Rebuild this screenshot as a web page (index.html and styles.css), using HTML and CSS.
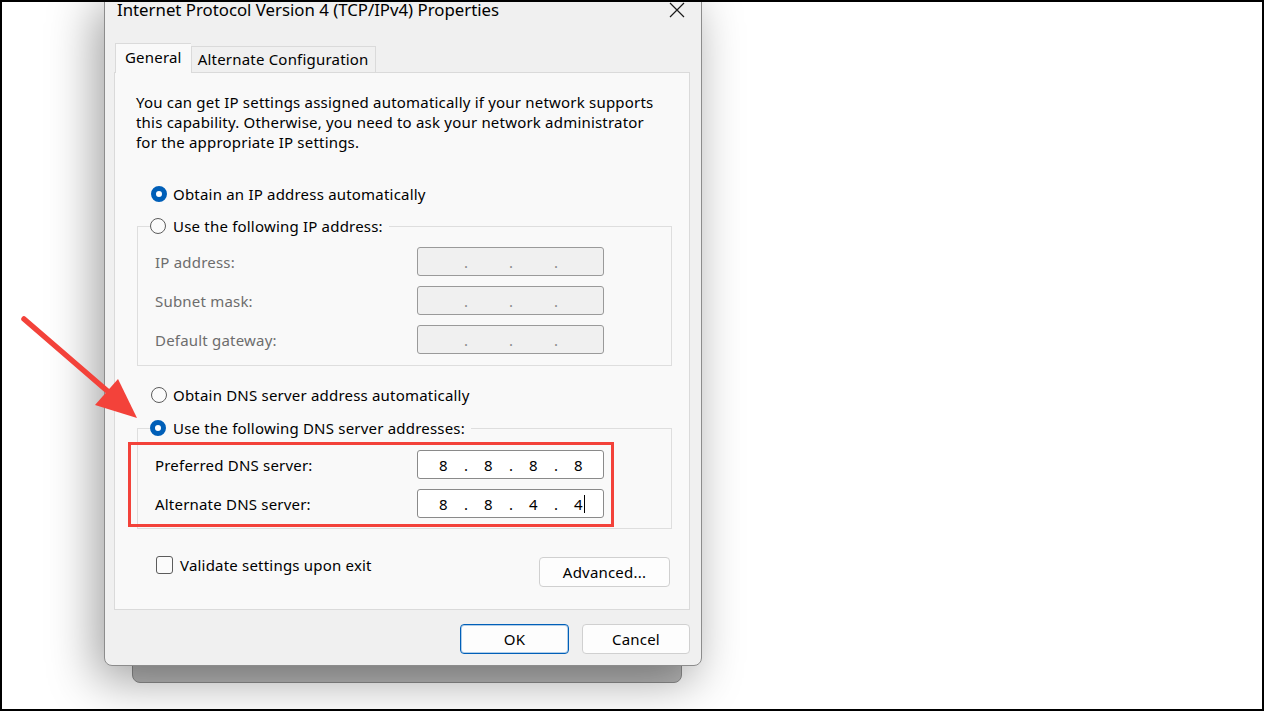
FILE: index.html
```html
<!DOCTYPE html>
<html>
<head>
<meta charset="utf-8">
<title>Internet Protocol Version 4 (TCP/IPv4) Properties</title>
<link rel="stylesheet" href="styles.css">
</head>
<body>
<div class="screen">
	<div class="back-window"></div>

	<div class="dialog">
		<div class="titlebar">
			<span class="title">Internet Protocol Version 4 (TCP/IPv4) Properties</span>
			<svg class="close" width="16" height="16" viewBox="0 0 16 16"><path d="M1 1L15 15M15 1L1 15" stroke="#1a1a1a" stroke-width="1.2" fill="none"/></svg>
		</div>

		<div class="tabs">
			<div class="tab active">General</div>
			<div class="tab">Alternate Configuration</div>
		</div>

		<div class="panel">
			<p class="intro">You can get IP settings assigned automatically if your network supports<br>this capability. Otherwise, you need to ask your network administrator<br>for the appropriate IP settings.</p>

			<div class="option first"><span class="radio on"></span>Obtain an IP address automatically</div>

			<fieldset class="group ip-group">
				<legend class="option"><span class="radio"></span>Use the following IP address:</legend>
				<div class="field"><span class="label">IP address:</span><div class="ipbox off"><span class="oct"></span><span class="dot">.</span><span class="oct"></span><span class="dot">.</span><span class="oct"></span><span class="dot">.</span><span class="oct"></span></div></div>
				<div class="field"><span class="label">Subnet mask:</span><div class="ipbox off"><span class="oct"></span><span class="dot">.</span><span class="oct"></span><span class="dot">.</span><span class="oct"></span><span class="dot">.</span><span class="oct"></span></div></div>
				<div class="field"><span class="label">Default gateway:</span><div class="ipbox off"><span class="oct"></span><span class="dot">.</span><span class="oct"></span><span class="dot">.</span><span class="oct"></span><span class="dot">.</span><span class="oct"></span></div></div>
			</fieldset>

			<div class="option dns-auto"><span class="radio"></span>Obtain DNS server address automatically</div>

			<fieldset class="group dns-group">
				<legend class="option"><span class="radio on"></span>Use the following DNS server addresses:</legend>
				<div class="field"><span class="label">Preferred DNS server:</span><div class="ipbox"><span class="oct">8</span><span class="dot">.</span><span class="oct">8</span><span class="dot">.</span><span class="oct">8</span><span class="dot">.</span><span class="oct">8</span></div></div>
				<div class="field"><span class="label">Alternate DNS server:</span><div class="ipbox"><span class="oct">8</span><span class="dot">.</span><span class="oct">8</span><span class="dot">.</span><span class="oct">4</span><span class="dot">.</span><span class="oct">4<span class="caret"></span></span></div></div>
			</fieldset>

			<div class="bottom-row">
				<div class="check"><span class="box"></span>Validate settings upon exit</div>
				<button class="btn advanced">Advanced...</button>
			</div>
		</div>

		<div class="actions">
			<button class="btn primary">OK</button>
			<button class="btn">Cancel</button>
		</div>
	</div>

	<div class="highlight"></div>

	<svg class="arrow" width="160" height="130" viewBox="0 300 160 130">
		<line x1="24" y1="319" x2="112" y2="395" stroke="#f3423a" stroke-width="5.5" stroke-linecap="round"/>
		<polygon points="95,405 118,379 137,418" fill="#f3423a"/>
	</svg>
</div>
</body>
</html>
```

FILE: styles.css
```css
body {
	margin: 0;
	font-family: "Noto Sans", "Open Sans", sans-serif;
	font-size: 15px;
	letter-spacing: .2px;
	color: #000;
}
.screen {
	position: relative;
	width: 1264px;
	height: 711px;
	box-sizing: border-box;
	border: 2px solid #000;
	background: #fff;
	overflow: hidden;
}
.back-window {
	position: absolute;
	left: 130px;
	top: 560px;
	width: 548px;
	height: 119px;
	background: #b9b9b9;
	border: 1px solid #8e8e8e;
	border-radius: 8px;
}
.dialog {
	position: absolute;
	left: 102px;
	top: -11px;
	width: 598px;
	box-sizing: border-box;
	background: #f0f0f0;
	border: 1px solid #8c8c8c;
	border-radius: 8px;
	padding: 0 11px 11px 9px;
	box-shadow: -8px 14px 48px rgba(0, 0, 0, .38);
}
.titlebar {
	display: flex;
	align-items: flex-start;
	justify-content: space-between;
	height: 44px;
	padding: 7px 5px 0 3px;
}
.title {
	font-size: 16.8px;
	letter-spacing: 0;
	line-height: 20px;
	padding-top: 1px;
}
.close {
	margin-top: 3px;
}
.tabs {
	display: flex;
	align-items: flex-end;
	height: 29px;
	padding-left: 1px;
	position: relative;
	z-index: 1;
}
.tab {
	height: 26px;
	box-sizing: border-box;
	padding: 0 6px;
	line-height: 24px;
	border: 1px solid #dadada;
	border-bottom: none;
	background: #f0f0f0;
}
.tab.active {
	height: 30px;
	margin-bottom: -1px;
	background: #f9f9f9;
	padding: 0 9px;
	line-height: 26px;
	border-right: none;
}
.panel {
	height: 538px;
	box-sizing: border-box;
	background: #f9f9f9;
	border: 1px solid #dadada;
	padding: 19px 17px 0 21px;
}
.intro {
	margin: 0;
	line-height: 20px;
}
.option {
	display: flex;
	align-items: center;
	gap: 6px;
	height: 20px;
	margin-left: 15px;
}
.option.first {
	margin-top: 32px;
}
.radio {
	width: 16px;
	height: 16px;
	box-sizing: border-box;
	border: 1px solid #5c5c5c;
	border-radius: 50%;
	background: #fbfbfb;
}
.radio.on {
	border: 5px solid #005fb8;
	background: #fff;
}
.group {
	margin: 12px 0 0 1px;
	padding: 0 0 11px 17px;
	border: 1px solid #dedede;
}
.group legend.option {
	margin-left: -5px;
	padding: 0 6px 0 0;
	gap: 7px;
}
.field {
	display: flex;
	align-items: center;
	height: 29px;
	margin-top: 10px;
}
.ip-group .field:first-of-type {
	margin-top: 11px;
}
.ip-group .label {
	color: #6d6d6d;
}
.label {
	width: 262px;
}
.ipbox {
	display: flex;
	align-items: center;
	width: 187px;
	height: 29px;
	box-sizing: border-box;
	padding-left: 7px;
	border: 1px solid #8a8a8a;
	border-radius: 3px;
	background: #fff;
}
.ipbox.off {
	background: #f0f0f0;
	border-color: #9a9a9a;
	color: #8a8a8a;
}
.oct {
	position: relative;
	width: 37px;
	text-align: center;
}
.dot {
	width: 8px;
	text-align: center;
}
.caret {
	position: absolute;
	top: 1px;
	right: 12px;
	height: 18px;
	border-left: 1px solid #000;
}
.dns-auto {
	margin-top: 19px;
}
.dns-group {
	margin-top: 13px;
	padding-bottom: 10px;
}
.dns-group .field:first-of-type {
	margin-top: 12px;
}
.bottom-row {
	display: flex;
	justify-content: space-between;
	align-items: flex-start;
	margin-top: 27px;
}
.check {
	display: flex;
	align-items: center;
	gap: 7px;
	height: 18px;
	margin-left: 20px;
}
.box {
	width: 17px;
	height: 18px;
	box-sizing: border-box;
	border: 1px solid #5c5c5c;
	border-radius: 3px;
	background: #fbfbfb;
}
.btn {
	height: 30px;
	box-sizing: border-box;
	font: inherit;
	letter-spacing: inherit;
	color: #000;
	background: #fdfdfd;
	border: 1px solid #d0d0d0;
	border-radius: 4px;
}
.advanced {
	width: 131px;
	margin: 1px 2px 0 0;
}
.actions {
	display: flex;
	justify-content: flex-end;
	gap: 13px;
	margin-top: 14px;
}
.actions .btn {
	width: 108px;
}
.btn.primary {
	width: 109px;
	border-color: #005fb8;
	box-shadow: inset 0 0 0 1px rgba(0, 95, 184, .3);
}
.highlight {
	position: absolute;
	left: 126px;
	top: 440px;
	width: 486px;
	height: 85px;
	box-sizing: border-box;
	border: 3px solid #f3423a;
}
.arrow {
	position: absolute;
	left: -2px;
	top: 298px;
}
```
